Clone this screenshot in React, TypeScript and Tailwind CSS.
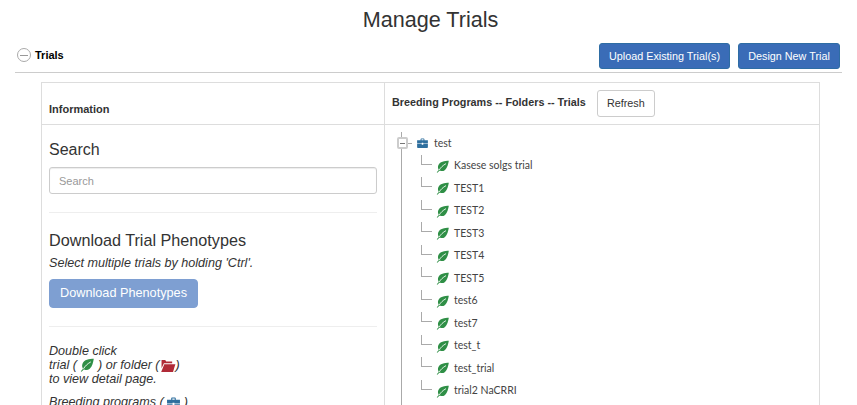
function LeafIcon({ className }: { className: string }) {
  return (
    <svg viewBox="0 0 14 14" className={className} aria-hidden>
      <path d="M13.800.800C9.500.800 3.800 1.600 2.400 6c-.5 1.700-.3 3 .3 4 .3.500.3.800-.1 1.300L.8 13.200l.7.500 1.800-1.800c.4-.4.800-.4 1.400-.2 1.700.6 3.500.2 5-1 2.700-2.300 3.400-6.300 4.100-9.900Z" fill="#2f8f46" />
      <path d="M3.500 10.800C5 8.100 7.400 5.800 10.800 3.900" fill="none" stroke="#fff" strokeWidth="0.9" />
    </svg>
  );
}

function BriefcaseIcon({ className }: { className: string }) {
  return (
    <svg viewBox="0 0 14 13" className={className} aria-hidden>
      <path d="M4.500 3V1.500C4.500.9 5 .5 5.500.5h3c.6 0 1 .4 1 1V3H14v4H8v-.8H6V7H0V3h4.500Zm1.200 0h2.600V1.700H5.700V3Z" fill="#2e6f9e" />
      <path d="M0 7.800h6v.9h2v-.9h6V12c0 .6-.4 1-1 1H1c-.6 0-1-.4-1-1V7.800Z" fill="#2e6f9e" />
    </svg>
  );
}

function FolderOpenIcon({ className }: { className: string }) {
  return (
    <svg viewBox="0 0 16 13" className={className} aria-hidden>
      <path d="M1 0h4l1 1.500h6.500V3.500H3.600L1 9V0Z" fill="#b02a37" />
      <path d="M4 4.500h12l-2.600 8.500H.6L4 4.500Z" fill="#b02a37" />
    </svg>
  );
}

const trials = [
  "Kasese solgs trial",
  "TEST1",
  "TEST2",
  "TEST3",
  "TEST4",
  "TEST5",
  "test6",
  "test7",
  "test_t",
  "test_trial",
  "trial2 NaCRRI",
];

export default function App() {
  return (
    <div className="h-[405px] overflow-hidden bg-white font-['Liberation_Sans',Arial,sans-serif] text-[#333]">
      <h1 className="h-[43px] pt-[6px] pl-[4px] text-center text-[21.6px] leading-[27px] font-normal">Manage Trials</h1>

      <div className="mx-[15px] flex h-[30px] items-start justify-between border-b border-[#ccc]">
        <div className="flex h-[24px] items-center gap-[4px] pl-[2px]">
          <span className="flex h-[14px] w-[14px] items-center justify-center rounded-full border border-[#aaa]">
            <span className="h-px w-[8px] bg-[#999]" />
          </span>
          <span className="text-[11px] font-bold text-black">Trials</span>
        </div>
        <div className="mr-[2px] flex gap-[8px]">
          <button className="h-[26px] w-[131px] rounded-[3px] border border-[#2e6da4] bg-[#3a6cb7] text-[10.8px] text-white">
            Upload Existing Trial(s)
          </button>
          <button className="h-[26px] w-[102px] rounded-[3px] border border-[#2e6da4] bg-[#3a6cb7] text-[10.8px] text-white">
            Design New Trial
          </button>
        </div>
      </div>

      <div className="mt-[9px] ml-[41px] w-[779px] border border-[#ddd]">
        <div className="flex h-[42px] border-b border-[#ddd]">
          <div className="flex w-[343px] items-end border-r border-[#ddd] px-[7px] pb-[7px]">
            <span className="text-[11px] font-bold">Information</span>
          </div>
          <div className="flex flex-1 items-center gap-[11px] pl-[7px]">
            <span className="-mt-[2px] text-[10.8px] font-bold">Breeding Programs -- Folders -- Trials</span>
            <button className="h-[27px] w-[58px] rounded-[3px] border border-[#ccc] bg-white text-[10.8px]">Refresh</button>
          </div>
        </div>

        <div className="flex">
          <div className="w-[343px] border-r border-[#ddd] px-[7px]">
            <h2 className="mt-[16px] text-[16px] leading-[18px] font-normal">Search</h2>
            <input
              placeholder="Search"
              className="mt-[8px] block h-[27px] w-full rounded-[3px] border border-[#ccc] px-[9px] text-[11px] shadow-[inset_0_1px_1px_rgba(0,0,0,0.075)] placeholder:text-[#999]"
            />
            <hr className="mt-[18px] border-[#eee]" />
            <h2 className="mt-[18px] text-[16.2px] leading-[18px] font-normal">Download Trial Phenotypes</h2>
            <p className="mt-[6px] text-[12.6px] leading-[17px] italic">Select multiple trials by holding 'Ctrl'.</p>
            <button className="mt-[7px] h-[29px] w-[149px] rounded-[4px] border border-[#7e9fd2] bg-[#7e9fd2] text-[12.7px] text-white">
              Download Phenotypes
            </button>
            <hr className="mt-[18px] border-[#eee]" />
            <div className="mt-[17px] text-[12.6px] leading-[14px] italic">
              <p>Double click</p>
              <p>
                trial ( <LeafIcon className="-my-[2px] inline-block h-[14px] w-[14px] align-[-1px]" /> ) or folder (
                <FolderOpenIcon className="-my-[2px] inline-block h-[12px] w-[16px] align-[-1px]" />)
              </p>
              <p>to view detail page.</p>
            </div>
            <p className="mt-[9px] text-[12.6px] leading-[14px] italic">
              Breeding programs ( <BriefcaseIcon className="-my-[2px] inline-block h-[12px] w-[13px] align-[-1px]" /> )
            </p>
          </div>

          <div className="flex-1 pt-[7px] pl-[16px] font-['Lato','Open_Sans',sans-serif] text-[10.5px] text-[#444]">
            <div className="h-[5px] border-l border-[#aaa]" />
            <div className="flex h-[12px] items-center">
              <span className="-ml-[4px] flex h-[12px] w-[11px] items-center justify-center rounded-[2px] border-2 border-[#ccc] bg-white">
                <span className="h-px w-[5px] bg-[#777]" />
              </span>
              <span className="h-px w-[4px] bg-[#aaa]" />
              <BriefcaseIcon className="ml-[5px] h-[10px] w-[11px]" />
              <span className="mt-[1px] ml-[6px]">test</span>
            </div>
            <div className="border-l border-[#aaa] pt-[5.75px] pl-[19px]">
              {trials.map((name) => (
                <div key={name} className="flex h-[22.5px] items-center">
                  <span className="h-[10px] w-[11px] self-start border-b border-l border-[#aaa]" />
                  <LeafIcon className="ml-[4px] h-[13px] w-[13px]" />
                  <span className="ml-[5px]">{name}</span>
                </div>
              ))}
              <div className="h-[30px]" />
            </div>
          </div>
        </div>
      </div>
    </div>
  );
}
